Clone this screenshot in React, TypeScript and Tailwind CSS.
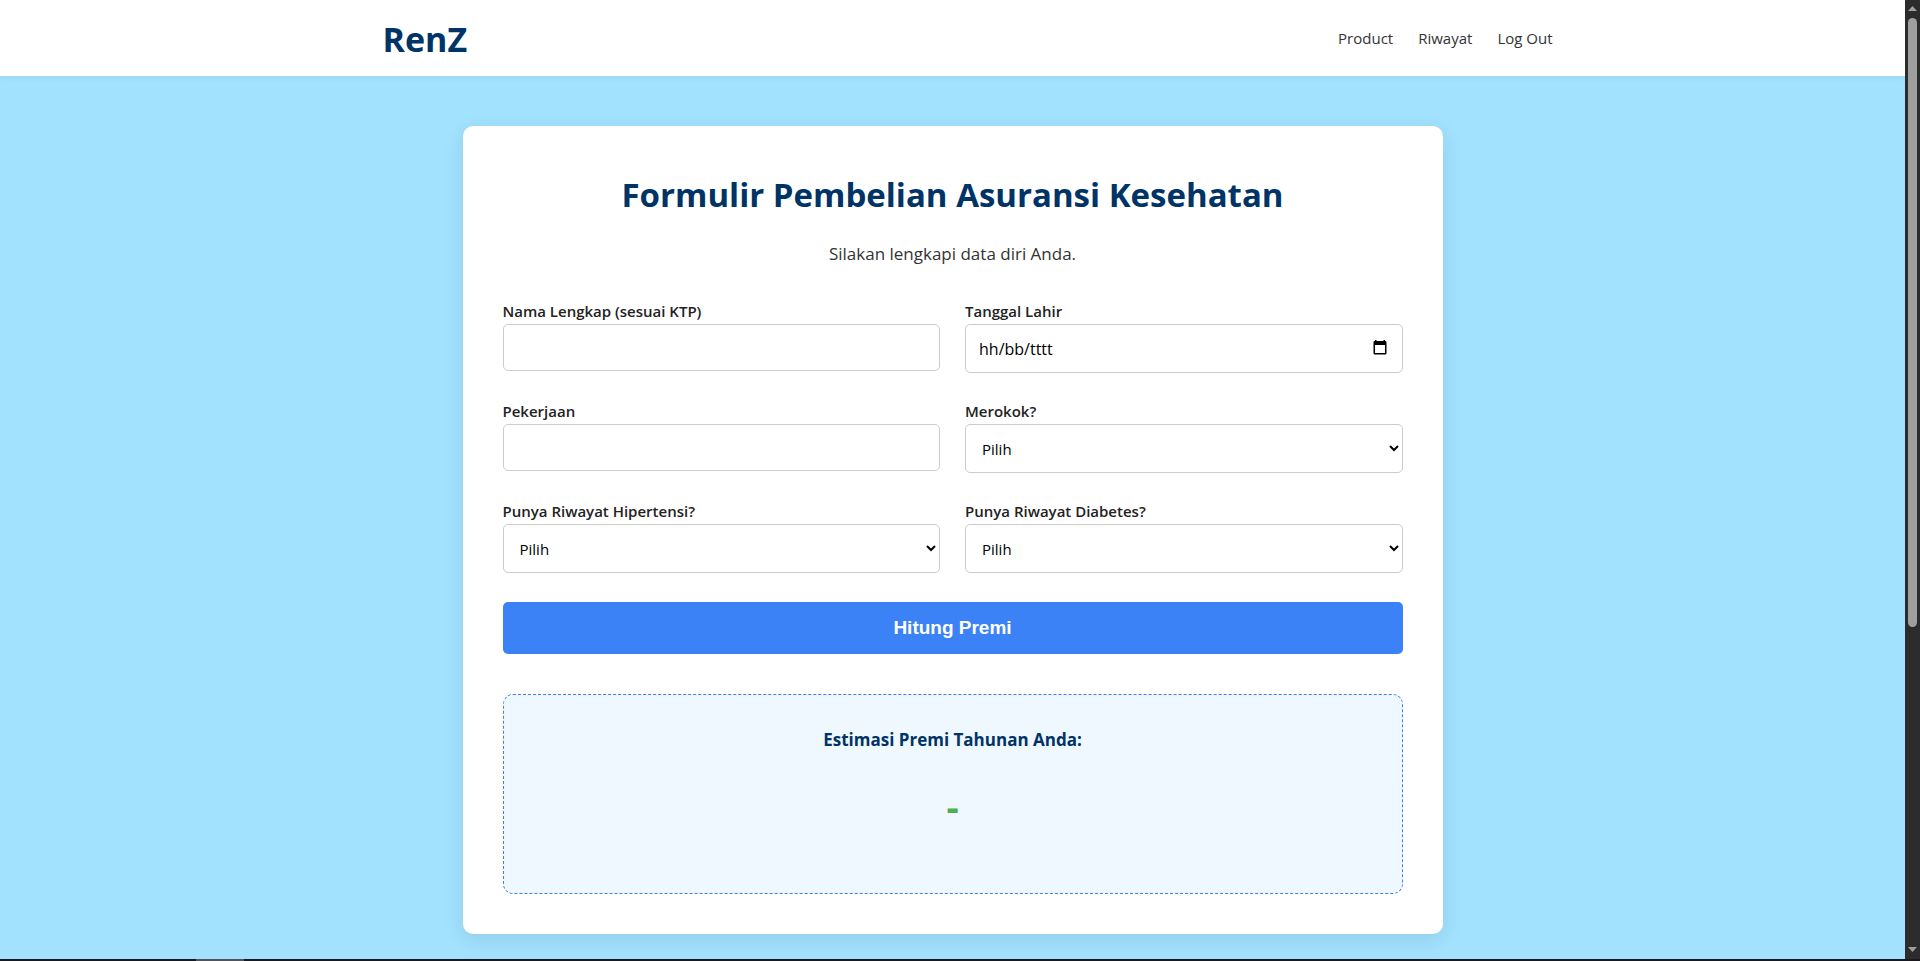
import type { ReactNode } from "react";

const controlClass =
  "block w-full rounded-[5px] border border-[#cccccc] bg-white text-black";

function Field({ id, label, children }: { id: string; label: string; children: ReactNode }) {
  return (
    <div className="flex flex-col">
      <label htmlFor={id} className="h-[26px] text-[15px] leading-[26px] font-semibold text-[#222222]">
        {label}
      </label>
      {children}
    </div>
  );
}

function ChoiceField({ id, label }: { id: string; label: string }) {
  return (
    <Field id={id} label={label}>
      <select id={id} className={`${controlClass} h-[49px] px-3 text-[15px]`}>
        <option>Pilih</option>
        <option>Ya</option>
        <option>Tidak</option>
      </select>
    </Field>
  );
}

function DateField({ id, label }: { id: string; label: string }) {
  return (
    <Field id={id} label={label}>
      <div className="relative">
        <input
          id={id}
          type="text"
          placeholder="hh/bb/tttt"
          className={`${controlClass} h-[49px] px-[13px] text-base placeholder:text-black`}
        />
        <button type="button" aria-label="Pilih tanggal" className="absolute top-4 right-4">
          <svg width="14" height="15" viewBox="0 0 14 15" className="block">
            <path
              fill="#000000"
              fillRule="evenodd"
              d="M2 0h1.500v1h7V0H12v1h.5A1.200 1.200 0 0 1 13.500 2.200v11a1.200 1.200 0 0 1-1.200 1.200H1.700A1.200 1.200 0 0 1 .5 13.200v-11A1.200 1.200 0 0 1 1.700 1H2zM2 5v8h10V5z"
            />
          </svg>
        </button>
      </div>
    </Field>
  );
}

function Header() {
  return (
    <header className="relative bg-white shadow-[0_2px_5px_rgba(0,0,0,0.05)]">
      <div className="mx-auto flex h-[76px] max-w-[1200px] items-center justify-between pt-px pl-[30px]">
        <a href="#" className="text-[34px] leading-none font-bold text-[#003366]">
          RenZ
        </a>
        <nav className="flex items-center gap-[25px] text-[15px] text-[#333333]">
          <a href="#product">Product</a>
          <a href="#riwayat">Riwayat</a>
          <a href="#logout">Log Out</a>
        </nav>
      </div>
    </header>
  );
}

function PremiumForm() {
  return (
    <form className="grid grid-cols-2 gap-[25px]">
      <Field id="nama" label="Nama Lengkap (sesuai KTP)">
        <input id="nama" type="text" className={`${controlClass} h-[47px] px-3 text-base`} />
      </Field>
      <DateField id="lahir" label="Tanggal Lahir" />
      <Field id="pekerjaan" label="Pekerjaan">
        <input id="pekerjaan" type="text" className={`${controlClass} h-[47px] px-3 text-base`} />
      </Field>
      <ChoiceField id="merokok" label="Merokok?" />
      <ChoiceField id="hipertensi" label="Punya Riwayat Hipertensi?" />
      <ChoiceField id="diabetes" label="Punya Riwayat Diabetes?" />
      <button
        type="button"
        className="col-span-2 mt-1 h-[52px] rounded-[5px] bg-[#3b82f6] font-['Liberation_Sans',sans-serif] text-[19px] font-bold text-white"
      >
        Hitung Premi
      </button>
    </form>
  );
}

function Scrollbar() {
  return (
    <div aria-hidden="true" className="flex w-[15px] shrink-0 flex-col items-center bg-[#2c2c2c]">
      <svg width="9" height="18" viewBox="0 0 9 18">
        <path d="M4.500 6L9 11H0z" fill="#9f9f9f" />
      </svg>
      <div className="w-full flex-1">
        <div className="mx-auto h-[66%] w-[9px] rounded-full bg-[#9f9f9f]" />
      </div>
      <svg width="9" height="18" viewBox="0 0 9 18">
        <path d="M0 6h9L4.500 11z" fill="#9f9f9f" />
      </svg>
    </div>
  );
}

export default function App() {
  return (
    <div className="flex h-screen flex-col font-['Open_Sans','Noto_Sans',sans-serif]">
      <div className="flex min-h-0 flex-1">
        <div className="flex-1 overflow-hidden bg-[#a2e2ff]">
          <Header />
          <main className="px-8 pt-[50px]">
            <section className="mx-auto max-w-[980px] rounded-[10px] bg-white p-10 shadow-[0_5px_20px_rgba(0,0,0,0.1)]">
              <h1 className="mt-1 text-center text-[33px] leading-[50px] font-bold text-[#003366]">
                Formulir Pembelian Asuransi Kesehatan
              </h1>
              <p className="mt-[18px] mb-7 text-center text-[17px] leading-8 text-[#333333]">
                Silakan lengkapi data diri Anda.
              </p>
              <PremiumForm />
              <div className="mt-10 flex h-[200px] flex-col items-center rounded-[10px] border border-dashed border-[#3b82f6] bg-[#f0f8ff] pt-[29px]">
                <h2 className="text-[17px] leading-8 font-bold text-[#003366]">
                  Estimasi Premi Tahunan Anda:
                </h2>
                <p className="mt-5 text-[38px] leading-[60px] font-bold text-[#4caf50]">-</p>
              </div>
            </section>
          </main>
        </div>
        <Scrollbar />
      </div>
      <div className="h-[2px] shrink-0 bg-[#1c1820] pl-[196px]">
        <div className="h-full w-12 bg-[#55525a]" />
      </div>
    </div>
  );
}
